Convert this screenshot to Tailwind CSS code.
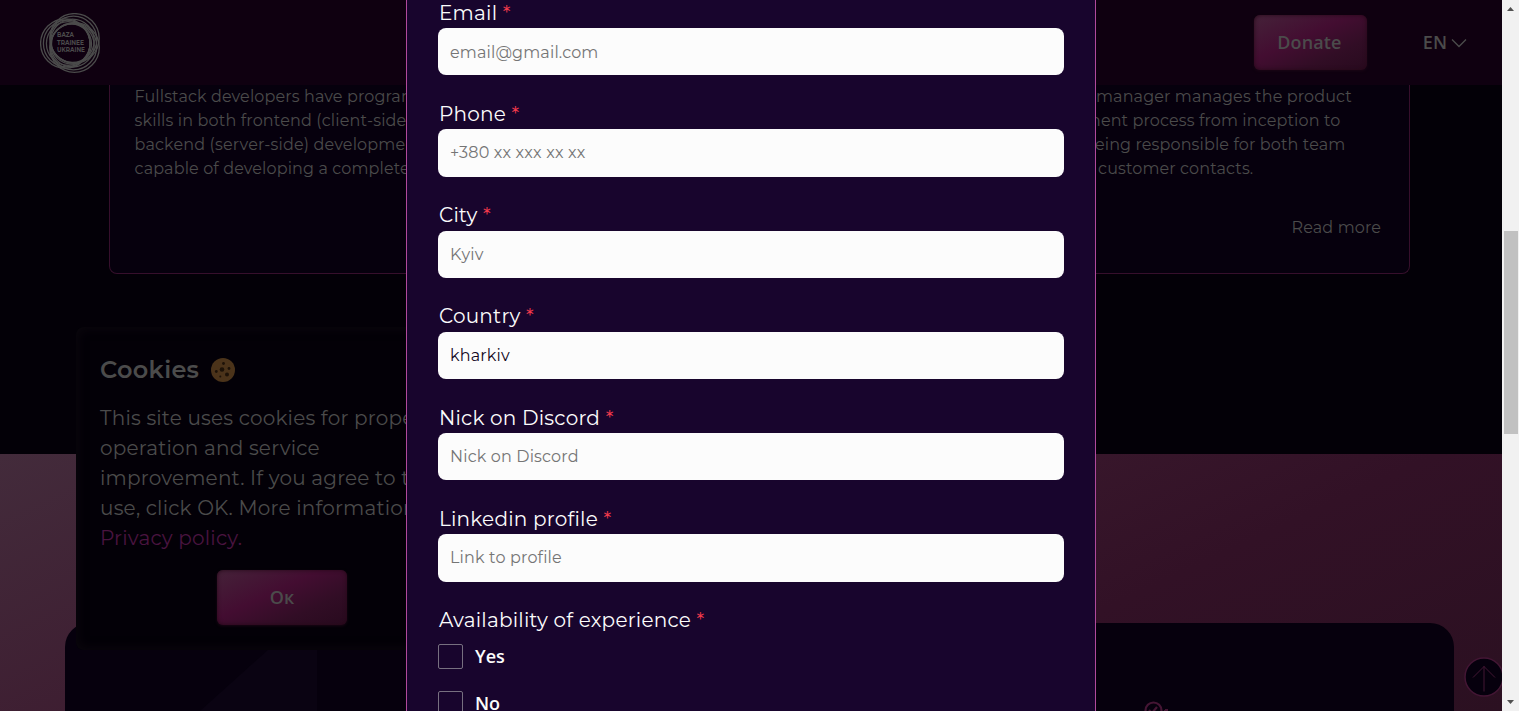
<!DOCTYPE html>
<html lang="en">
<head>
<meta charset="utf-8">
<title>Baza Trainee Ukraine</title>
<script src="https://cdn.jsdelivr.net/npm/@tailwindcss/browser@4"></script>
</head>
<body class="relative flex h-[711px] w-[1519px] overflow-hidden bg-[#030007] font-['Montserrat','Inter',sans-serif] text-[#4b4b4b]">
<div class="relative flex h-full w-[1502px] shrink-0 flex-col overflow-hidden">
  <header class="flex h-[85px] shrink-0 items-center justify-between bg-[#0f0010] pr-[35px] pl-10 font-['Open_Sans',sans-serif] text-lg font-semibold">
    <svg class="size-[60px]" viewBox="0 0 60 60" fill="none" stroke="#4b4b4b" stroke-width="1.300">
      <circle cx="34.500" cy="25.300" r="24.700"/><circle cx="33.500" cy="26.500" r="23.300"/><circle cx="32.500" cy="27.800" r="21.700"/>
      <circle cx="25.300" cy="30.500" r="24.700"/><circle cx="26.700" cy="30.500" r="23.300"/><circle cx="28.200" cy="30.500" r="21.800"/>
      <circle cx="34.500" cy="34.500" r="24.800"/><circle cx="33.500" cy="33.500" r="23.300"/><circle cx="32.500" cy="32.300" r="21.700"/><circle cx="31.500" cy="31" r="20"/>
      <g fill="#4b4b4b" stroke="none" font-family="Montserrat, Inter" font-size="6.200" font-weight="700">
        <text x="17" y="23.500" textLength="17" lengthAdjust="spacingAndGlyphs">BAZA</text><text x="17" y="31.500" textLength="27" lengthAdjust="spacingAndGlyphs">TRAINEE</text><text x="17" y="39" textLength="28" lengthAdjust="spacingAndGlyphs">UKRAINE</text>
      </g>
    </svg>
    <div class="flex items-center">
      <button class="mr-[56px] h-[55px] w-[113px] rounded-md bg-linear-[155deg,#452239,#430d31_42%,#310d25_72%,#280a1e] pr-[2px] pb-[2px] tracking-[0.1px] shadow-[inset_0_0_4px_#260818,0_1px_3px_#1b0615]">Donate</button>
      <span class="pb-[2px]">EN</span>
      <svg class="ml-1 h-4 w-4" viewBox="0 0 16 16" fill="none" stroke="#4b4b4b" stroke-width="1.300"><path d="M1 4.500 8 11.500 15 4.500"/></svg>
    </div>
  </header>
  <section class="flex h-[369px] shrink-0 justify-between pr-[92px] pl-[109px] text-base leading-6 tracking-[0.120px]">
    <article class="h-[189px] w-[410px] rounded-b-lg border border-t-0 border-[#360f2c] bg-[#06000d] pl-6 whitespace-nowrap">
      <p class="pl-[0.500px]">Fullstack developers have program<br><span class="tracking-[0.150px]">skills in both frontend (client-side</span><br><span class="tracking-[0.150px]">backend (server-side) developme</span><br>capable of developing a complete</p>
    </article>
    <article class="flex h-[189px] w-[410px] flex-col items-end rounded-b-lg border border-t-0 border-[#360f2c] bg-[#06000d] pr-7 whitespace-nowrap">
      <p class="w-[285px]">manager manages the product<br><span class="-ml-[22px]">ement process from inception to</span><br><span class="-ml-[12px]">being responsible for both team</span><br><span class="ml-[2px]">customer contacts.</span></p>
      <a class="mt-[35px]">Read more</a>
    </article>
  </section>
  <section class="h-[257px] shrink-0 bg-linear-[155deg,#432b3b,#3d1c30_35%,#321126_70%,#2b1021] pt-[169px] pr-[48px] pl-[65px]">
    <div class="flex h-[88px] w-[1389px] items-start overflow-hidden rounded-t-3xl bg-[#06000d]">
      <svg class="mt-4 ml-[135px] h-[72px] w-[117px]" viewBox="0 0 117 72"><path d="M0 72 80 0H117V72Z" fill="#0a0312"/></svg>
      <svg class="mt-[78px] ml-[826px] h-6 w-7 shrink-0" viewBox="0 0 28 24" fill="none" stroke="#451534" stroke-width="2.200"><circle cx="10.500" cy="9.500" r="8"/><path d="m6 9 3 3 5-6M22 9h3M22 9v4"/></svg>
    </div>
  </section>

  <aside class="absolute top-[327px] left-[76px] flex h-[323px] w-[412px] flex-col rounded-lg bg-[#030007] px-6 pt-[25px] whitespace-nowrap shadow-[inset_0_0_12px_#0d080f]">
    <h2 class="flex h-9 items-center gap-3 text-2xl font-semibold tracking-[0.300px]"><span>Cookies</span>
      <svg class="size-6" viewBox="0 0 24 24"><circle cx="12" cy="12" r="12" fill="#4b331a"/><g fill="#1d1208"><circle cx="11" cy="11.500" r="2.300"/><circle cx="16" cy="16.500" r="2"/><circle cx="12.500" cy="5.500" r="1.400"/><circle cx="18" cy="10.500" r="1.400"/><circle cx="5.300" cy="13.500" r="1.400"/><circle cx="9.300" cy="18.500" r="1"/></g></svg>
    </h2>
    <p class="mt-[15px] text-xl leading-[30px] tracking-[0.200px]">This site uses cookies for proper<br>operation and service<br>improvement. If you agree to the<br>use, click OK. More information<br><a class="text-[#4a1440]">Privacy policy.</a></p>
    <button class="mt-[17px] h-[55px] w-[130px] self-center rounded-md bg-linear-[155deg,#452239,#430d31_42%,#310d25_72%,#280a1e] pb-[2px] font-['Open_Sans',sans-serif] text-lg font-semibold shadow-[inset_0_0_4px_#260818,0_1px_3px_#1b0615]">Oк</button>
  </aside>

  <svg class="absolute top-[656px] left-[1463px] size-[42px]" viewBox="0 0 42 42" fill="none" stroke="#431634"><circle cx="21" cy="21" r="19" fill="#06000d" stroke-width="1.500"/><path d="M21 35.500V10M10 21.500 21 10.500l11 11"/></svg>

  <form class="absolute top-0 left-[406px] flex h-[711px] w-[690px] flex-col overflow-hidden border-x border-[#b04a9c] bg-[#18052d] px-[31px] text-xl tracking-[0.220px] text-[#fcfcfc]">
    <div class="flex h-[101.250px] shrink-0 flex-col"><label class="h-[28px] pl-[1px] leading-[26px]">Email <span class="text-[#f43a4c]">*</span></label><div class="flex h-[47.250px] items-center rounded-lg bg-[#fcfcfc] pt-[2px] pl-3 text-base tracking-[0.150px] text-[#757575]">email@gmail.com</div></div>
    <div class="flex h-[101.250px] shrink-0 flex-col"><label class="h-[28px] pl-[1px] leading-[26px]">Phone <span class="text-[#f43a4c]">*</span></label><div class="flex h-[47.250px] items-center rounded-lg bg-[#fcfcfc] pl-3 text-base tracking-[0.180px] text-[#757575]">+380 xx xxx xx xx</div></div>
    <div class="flex h-[101.250px] shrink-0 flex-col"><label class="h-[28px] pl-[1px] leading-[25px]">City <span class="text-[#f43a4c]">*</span></label><div class="flex h-[47.250px] items-center rounded-lg bg-[#fcfcfc] pt-[2px] pl-3 text-base tracking-[0.130px] text-[#757575]">Kyiv</div></div>
    <div class="flex h-[101.250px] shrink-0 flex-col"><label class="h-[28px] pl-[1px] leading-[25px]">Country <span class="text-[#f43a4c]">*</span></label><div class="flex h-[47.250px] items-center rounded-lg bg-[#fcfcfc] pt-[2px] pl-3 text-base tracking-[0.150px] text-[#120722]">kharkiv</div></div>
    <div class="flex h-[101.250px] shrink-0 flex-col"><label class="h-[28px] pl-[1px] leading-[26px]">Nick on Discord <span class="text-[#f43a4c]">*</span></label><div class="flex h-[47.250px] items-center rounded-lg bg-[#fcfcfc] pl-3 text-base tracking-[0.160px] text-[#757575]">Nick on Discord</div></div>
    <div class="flex h-[101.250px] shrink-0 flex-col"><label class="h-[28px] pl-[1px] leading-[26px]">Linkedin profile <span class="text-[#f43a4c]">*</span></label><div class="flex h-[47.250px] items-center rounded-lg bg-[#fcfcfc] pl-3 text-base tracking-[0.160px] text-[#757575]">Link to profile</div></div>
    <div class="h-[37px] shrink-0 pl-[1px] leading-[25px]">Availability of experience <span class="text-[#f43a4c]">*</span></div>
    <div class="flex shrink-0 flex-col gap-[23px] font-['Open_Sans',sans-serif] text-lg leading-6 font-semibold tracking-normal">
      <label class="flex h-6 items-center gap-3"><span class="size-[25px] shrink-0 rounded-[2px] border border-[#777080]"></span><span class="pb-[1px]">Yes</span></label>
      <label class="flex h-6 items-center gap-3"><span class="size-[25px] shrink-0 rounded-[2px] border border-[#777080]"></span><span class="pb-[1px]">No</span></label>
    </div>
  </form>
</div>
<div class="flex h-full w-[17px] shrink-0 flex-col items-center bg-[#f1f1f1]">
  <svg class="mt-[7px] h-[4px] w-[7px]" viewBox="0 0 7 4"><path d="M0 4 3.500 0 7 4Z" fill="#505050"/></svg>
  <div class="mt-[220px] h-[203px] w-[14px] bg-[#c1c1c1]"></div>
  <svg class="mt-auto mb-[7px] h-[4px] w-[7px]" viewBox="0 0 7 4"><path d="M0 0 3.500 4 7 0Z" fill="#505050"/></svg>
</div>
</body>
</html>
